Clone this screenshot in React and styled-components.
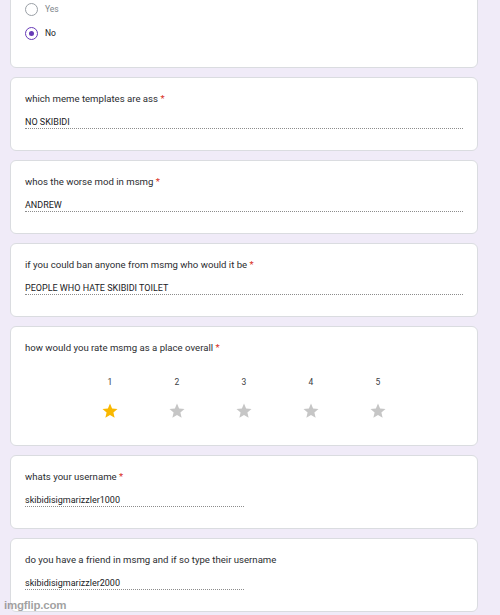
import React from "react";
import styled, { createGlobalStyle } from "styled-components";

const Global = createGlobalStyle`
  html, body { margin: 0; padding: 0; background: #f0ebf8; }
  body { font-family: Roboto, "Noto Sans", Arial, sans-serif; color: #202124; overflow: hidden; }
`;

const Page = styled.div`
  position: relative;
  width: 500px;
  height: 615px;
  overflow: hidden;
  padding-left: 10px;
  box-sizing: border-box;
`;

const Column = styled.div`
  width: 468px;
  display: flex;
  flex-direction: column;
  gap: 9px;
`;

const Card = styled.div`
  background: #fff;
  border: 1px solid #dadce0;
  border-radius: 6px;
  box-sizing: border-box;
  padding: 14px 14px 21px;
  ${(p) => p.$cut && "margin-top: -20px; padding-top: 16px; padding-bottom: 22px;"}
  ${(p) => p.$tall && "padding-bottom: 25px;"}
`;

const Title = styled.div`
  font-size: 9.6px;
  line-height: 14px;
  color: #2b2d30;
`;

const Req = styled.span`
  color: #d93025;
`;

const Answer = styled.div`
  margin-top: 10px;
  font-size: 9px;
  line-height: 12px;
  height: 12px;
  color: #202124;
  border-bottom: 1px dotted rgba(0, 0, 0, 0.45);
  width: ${(p) => (p.$half ? "219px" : "438px")};
`;

const RadioRow = styled.div`
  display: flex;
  align-items: center;
  height: 24px;
  gap: 7px;
`;

const Radio = styled.span`
  width: 13px;
  height: 13px;
  box-sizing: border-box;
  border-radius: 50%;
  border: 1.5px solid ${(p) => (p.$on ? "#673ab7" : "#9aa0a6")};
  display: flex;
  align-items: center;
  justify-content: center;
  &::after {
    content: "";
    width: 5px;
    height: 5px;
    border-radius: 50%;
    background: ${(p) => (p.$on ? "#673ab7" : "transparent")};
  }
`;

const RadioLabel = styled.span`
  font-size: 8.5px;
  color: ${(p) => (p.$muted ? "#80868b" : "#202124")};
`;

const RatingRow = styled.div`
  display: flex;
  justify-content: center;
  margin-top: 21px;
`;

const RatingCol = styled.div`
  width: 67px;
  display: flex;
  flex-direction: column;
  align-items: center;
  gap: 14px;
`;

const Num = styled.div`
  font-size: 8.5px;
  line-height: 12px;
  color: #3c4043;
`;

const StarSvg = styled.svg`
  display: block;
  width: 18px;
  height: 18px;
  fill: ${(p) => (p.$on ? "#f9b800" : "#c6c6c6")};
`;

const Watermark = styled.div`
  position: absolute;
  left: 4px;
  top: 599px;
  font-family: "Liberation Sans", Arial, sans-serif;
  font-size: 11.5px;
  font-weight: bold;
  color: rgba(120, 120, 120, 0.7);
  letter-spacing: -0.2px;
`;

const Star = ({ on }) => (
  <StarSvg viewBox="0 0 24 24" $on={on}>
    <path d="M12 17.27L18.18 21l-1.64-7.03L22 9.24l-7.19-.61L12 2 9.19 8.63 2 9.24l5.46 4.73L5.82 21z" />
  </StarSvg>
);

const TextQ = ({ title, answer, required = true, half }) => (
  <Card>
    <Title>
      {title}
      {required && <Req> *</Req>}
    </Title>
    <Answer $half={half}>{answer}</Answer>
  </Card>
);

export default function App() {
  return (
    <>
      <Global />
      <Page>
        <Column>
          <Card $cut>
            <RadioRow>
              <Radio />
              <RadioLabel $muted>Yes</RadioLabel>
            </RadioRow>
            <RadioRow>
              <Radio $on />
              <RadioLabel>No</RadioLabel>
            </RadioRow>
          </Card>
          <TextQ title="which meme templates are ass" answer="NO SKIBIDI" />
          <TextQ title="whos the worse mod in msmg" answer="ANDREW" />
          <TextQ
            title="if you could ban anyone from msmg who would it be"
            answer="PEOPLE WHO HATE SKIBIDI TOILET"
          />
          <Card $tall>
            <Title>
              how would you rate msmg as a place overall<Req> *</Req>
            </Title>
            <RatingRow>
              {[1, 2, 3, 4, 5].map((n) => (
                <RatingCol key={n}>
                  <Num>{n}</Num>
                  <Star on={n === 1} />
                </RatingCol>
              ))}
            </RatingRow>
          </Card>
          <TextQ title="whats your username" answer="skibidisigmarizzler1000" half />
          <TextQ
            title="do you have a friend in msmg and if so type their username"
            answer="skibidisigmarizzler2000"
            required={false}
            half
          />
        </Column>
        <Watermark>imgflip.com</Watermark>
      </Page>
    </>
  );
}
